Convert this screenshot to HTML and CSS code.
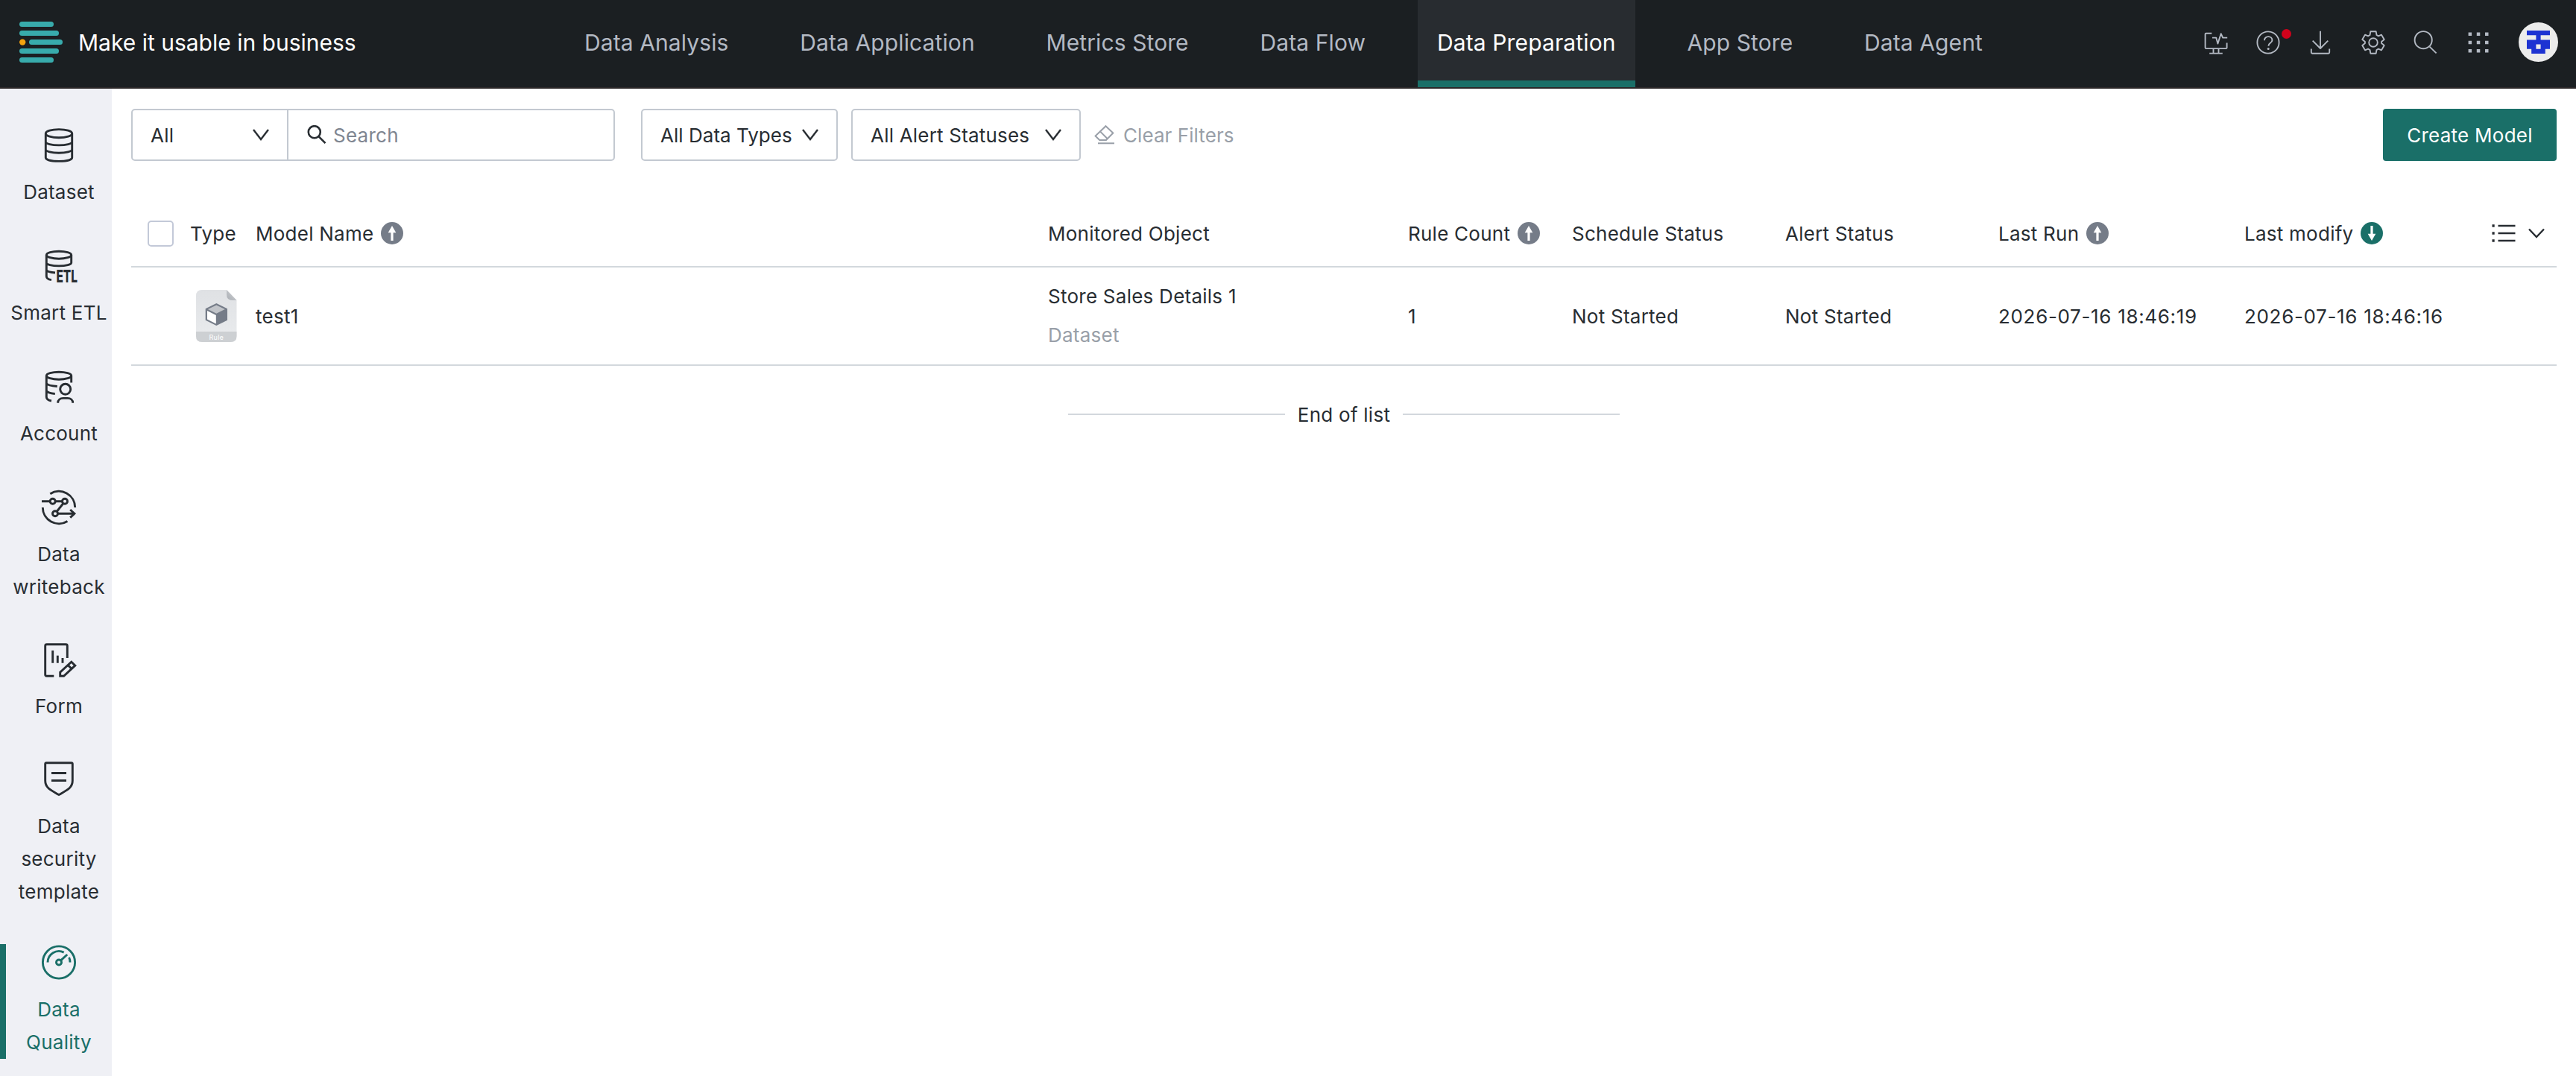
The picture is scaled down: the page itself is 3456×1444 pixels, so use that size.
FILE: index.html
```html
<!DOCTYPE html>
<html lang="en">

<head>
	<meta charset="UTF-8">
	<meta name="viewport" content="width=device-width, initial-scale=1.0">
	<title>Data Quality</title>
	<link rel="stylesheet" href="styles.css">
</head>

<body>
	<header class="topbar">
		<div class="brand">
			<svg class="logo" viewBox="0 0 60 56">
				<g fill="#38abac">
					<rect x="1" y="0" width="46" height="7" rx="3.5" />
					<rect x="1" y="12" width="53" height="7" rx="3.5" />
					<rect x="14" y="24" width="45" height="7" rx="3.5" />
					<rect x="1" y="36" width="53" height="7" rx="3.5" />
					<rect x="1" y="48" width="46" height="7" rx="3.5" />
				</g>
				<circle cx="5.2" cy="27.6" r="4.2" fill="#f5a30f" />
			</svg>
			<span>Make it usable in business</span>
		</div>

		<nav class="topnav">
			<a href="#">Data Analysis</a>
			<a href="#">Data Application</a>
			<a href="#">Metrics Store</a>
			<a href="#">Data Flow</a>
			<a href="#" class="active">Data Preparation</a>
			<a href="#">App Store</a>
			<a href="#">Data Agent</a>
		</nav>

		<div class="tools">
			<svg class="tool" viewBox="0 0 32 32">
				<path d="M10.3 3.7H2.8q-1.2 0-1.2 1.2v18q0 1.2 1.2 1.2h26.6q1.2 0 1.2-1.2V16.5M11 9.6h5.2l2.2 8 4.3-13.4 2.5 5.4h6M12.5 24v6.4M19.5 24v6.4M7.2 30.6h17.6" />
			</svg>
			<span class="help">
				<svg class="tool" viewBox="0 0 32 32">
					<circle cx="16" cy="16" r="14.6" />
					<path d="M11 13.2v-.3a5 4.6 0 0 1 10.4 0c0 3.8-5 3.4-5 7.8" />
					<circle cx="16.2" cy="24.6" r="1.5" class="solid" />
				</svg>
				<i class="dot"></i>
			</span>
			<svg class="tool" viewBox="0 0 32 32">
				<path d="M16 .7v23M5.7 13.6L16 24l10.3-10.4M3.8 24.5v4.8q0 1.4 1.4 1.4h21.6q1.4 0 1.4-1.4v-4.8" />
			</svg>
			<svg class="tool" viewBox="0 0 32 32">
				<path d="M11.5 6L12.3 1.3h7.4L20.5 6l2.4 1.4 4.1-1.7 3.7 6.2-3.6 3v2.2l3.6 3-3.7 6.2-4.1-1.7-2.4 1.4-.8 4.7h-7.4L11.5 26l-2.4-1.4L5 26.3l-3.7-6.2 3.6-3v-2.2l-3.6-3L5 5.7l4.1 1.7z" />
				<circle cx="16" cy="16" r="5.8" />
			</svg>
			<svg class="tool" viewBox="0 0 32 32">
				<circle cx="13.2" cy="12.7" r="11.6" />
				<path d="M21.6 21.6l9 8.8" />
			</svg>
			<svg class="tool" viewBox="0 0 32 32">
				<path class="solid" d="M2.6 2.6h4.5v4.5H2.6zM13.8 2.6h4.5v4.5h-4.5zM25 2.6h4.5v4.5H25zM2.6 13.8h4.5v4.5H2.6zM13.8 13.8h4.5v4.5h-4.5zM25 13.8h4.5v4.5H25zM2.6 25h4.5v4.5H2.6zM13.8 25h4.5v4.5h-4.5zM25 25h4.5v4.5H25z" />
			</svg>
			<svg class="avatar" viewBox="0 0 53 53">
				<circle cx="26.5" cy="26.5" r="26.5" fill="#ececec" />
				<path fill="#1d33d2" fill-rule="evenodd" d="M11 11h31v6.2H29.6v6.2H42v12.4h-6.2V42H17.2v-6.2H11V23.4h12.4v-6.2H11zM23.4 29.6v6.2h6.2v-6.2z" />
			</svg>
		</div>
	</header>

	<div class="layout">
		<aside class="sidebar">
			<a href="#" class="side-item">
				<svg viewBox="0 0 50 50">
					<ellipse cx="25" cy="9.2" rx="17.7" ry="5.6" />
					<path d="M7.3 9.2v32.3c0 3 8 4.9 17.7 4.9s17.7-1.9 17.7-4.9V9.2M7.3 20.2c0 2.7 8 4.7 17.7 4.7s17.7-2 17.7-4.7M7.3 30.6c0 2.7 8 4.7 17.7 4.7s17.7-2 17.7-4.7" />
				</svg>
				<span>Dataset</span>
			</a>
			<a href="#" class="side-item">
				<svg viewBox="0 0 50 50">
					<ellipse cx="25" cy="10.2" rx="16.7" ry="5" />
					<path d="M41.7 10.2v10.2c0 2.5-7 4.5-16.7 4.5S8.3 22.9 8.3 20.4M8.3 10.2v28.5c0 2.4 2.6 4.2 6.7 4.9M8.3 30.5c1.2 2 5 3 11.7 3.5" />
					<text x="21.4" y="46.8" textLength="28.6" lengthAdjust="spacingAndGlyphs">ETL</text>
				</svg>
				<span>Smart ETL</span>
			</a>
			<a href="#" class="side-item">
				<svg viewBox="0 0 50 50">
					<ellipse cx="25" cy="10.2" rx="16.7" ry="5" />
					<path d="M41.7 10.2v9.3M8.3 10.2v28.5c0 2.6 2.6 4.5 6.7 5.3M8.3 20.5c1.6 2.5 6 3.5 14.5 4M8.3 30.5c1.2 2.2 5 3.4 11.5 4" />
					<circle cx="33.7" cy="28.3" r="7" />
					<path d="M23.7 46.7c0-4 3-6.3 7-6.3h6c4 0 7 2.3 7 6.3" />
				</svg>
				<span>Account</span>
			</a>
			<a href="#" class="side-item">
				<svg viewBox="0 0 50 50">
					<path d="M13.3 6.7A21.7 21.7 0 0 1 46.7 25M3.3 25A21.7 21.7 0 0 0 36.5 43.4" />
					<circle cx="16.7" cy="16.7" r="3.5" />
					<circle cx="33" cy="16.7" r="3.5" />
					<circle cx="20" cy="33.3" r="3.5" />
					<path d="M2 16.7h11.2M20.2 16.7h9.3M30.9 19.5l-8.7 11M23.5 33.3h22M40.2 28l5.7 5.3-5.7 5.3" />
				</svg>
				<span>Data<br>writeback</span>
			</a>
			<a href="#" class="side-item">
				<svg viewBox="0 0 50 50">
					<path d="M36.3 23V6.7q0-2-2-2H8.7q-2 0-2 2v38.6q0 2 2 2h9.6M16.7 13v16.7M23.3 19.7v10M30 23v6.7" />
					<path d="M26.7 47.3v-5.2L41.8 28.2l5 4.9-15.2 14.2zM37 32.5l5 4.9" />
				</svg>
				<span>Form</span>
			</a>
			<a href="#" class="side-item">
				<svg viewBox="0 0 50 50">
					<path d="M6.7 4.3q0-1.5 1.5-1.5h33.6q1.5 0 1.5 1.5v22.5c0 10-8.5 13-18.3 18.8C15.2 39.8 6.7 36.8 6.7 26.8zM15 16.5h20M15 26.5h20" />
				</svg>
				<span>Data<br>security<br>template</span>
			</a>
			<a href="#" class="side-item active">
				<svg viewBox="0 0 50 50">
					<circle cx="25" cy="24.5" r="21.6" />
					<circle cx="25" cy="24.5" r="3.5" />
					<path d="M10 24.5A15 15 0 0 1 31.7 11.1M38.6 17.8Q40.1 21 40 24.5M27.6 21.9l8.6-7.9" />
				</svg>
				<span>Data<br>Quality</span>
			</a>
		</aside>

		<main class="content">
			<div class="toolbar">
				<div class="search-group">
					<button class="select scope">
						<span>All</span>
						<svg class="chevron" viewBox="0 0 22 16"><path d="M1 1l10 13L21 1" /></svg>
					</button>
					<div class="search-box">
						<svg class="search-icon" viewBox="0 0 26 26">
							<circle cx="9.8" cy="9.2" r="8" />
							<path d="M15.5 15.2l9 9" />
						</svg>
						<input type="text" placeholder="Search">
					</div>
				</div>
				<button class="select types">
					<span>All Data Types</span>
					<svg class="chevron" viewBox="0 0 22 16"><path d="M1 1l10 13L21 1" /></svg>
				</button>
				<button class="select statuses">
					<span>All Alert Statuses</span>
					<svg class="chevron" viewBox="0 0 22 16"><path d="M1 1l10 13L21 1" /></svg>
				</button>
				<button class="clear">
					<svg viewBox="0 0 28 28">
						<path d="M15.5 2.2l9.8 9.3-9.3 9.5H7.2L1.6 15.5zM8.2 9.6l9.6 9.6" />
						<path d="M5 25.3h22" />
					</svg>
					<span>Clear Filters</span>
				</button>
				<button class="create">Create Model</button>
			</div>

			<div class="table">
				<div class="row head">
					<div><span class="checkbox"></span></div>
					<div>Type</div>
					<div>Model Name
						<svg class="sort" viewBox="0 0 30 30"><circle cx="15" cy="15" r="15" /><path d="M15 5l5.3 9.3h-3.7V25h-3.2V14.3H9.7z" /></svg>
					</div>
					<div>Monitored Object</div>
					<div>Rule Count
						<svg class="sort" viewBox="0 0 30 30"><circle cx="15" cy="15" r="15" /><path d="M15 5l5.3 9.3h-3.7V25h-3.2V14.3H9.7z" /></svg>
					</div>
					<div>Schedule Status</div>
					<div>Alert Status</div>
					<div>Last Run
						<svg class="sort" viewBox="0 0 30 30"><circle cx="15" cy="15" r="15" /><path d="M15 5l5.3 9.3h-3.7V25h-3.2V14.3H9.7z" /></svg>
					</div>
					<div>Last modify
						<svg class="sort desc" viewBox="0 0 30 30"><circle cx="15" cy="15" r="15" /><path d="M15 25l5.3-9.3h-3.7V5h-3.2v10.7H9.7z" /></svg>
					</div>
					<div class="view">
						<svg class="list" viewBox="0 0 32 24">
							<path d="M8.5 2h23M8.5 12h23M8.5 22h23" />
							<path d="M.5 2h3.2M.5 12h3.2M.5 22h3.2" class="bullets" />
						</svg>
						<svg class="caret" viewBox="0 0 22 14"><path d="M1 1.5l10 10.5L21 1.5" /></svg>
					</div>
				</div>

				<div class="row">
					<div></div>
					<div>
						<svg class="file" viewBox="0 0 56 72">
							<defs>
								<linearGradient id="sheet" x1="0" y1="0" x2="0" y2="1">
									<stop offset="0" stop-color="#dfe1e4" />
									<stop offset="1" stop-color="#eaecee" />
								</linearGradient>
								<linearGradient id="fold" x1="0" y1="1" x2="1" y2="0">
									<stop offset="0" stop-color="#a9adb3" />
									<stop offset="1" stop-color="#d3d5d8" />
								</linearGradient>
							</defs>
							<path d="M8 1h33l13.5 14v48q0 8-8 8H8q-8 0-8-8V9q0-8 8-8z" fill="url(#sheet)" />
							<path d="M0 57h54.5v6q0 8-8 8H8q-8 0-8-8z" fill="#cdd0d3" />
							<path d="M41 1l13.5 14H49q-8 0-8-8z" fill="url(#fold)" />
							<path d="M27.3 19L42 26.2v15.6L27.3 49 12.7 41.8V26.2z" fill="#757c88" />
							<path d="M27.3 21.4L38.8 27l-11.5 5.8L15.8 27z" fill="#c1c4c9" />
							<path d="M15 29l11.8 6v11.5L15 40.5z" fill="#fff" />
							<text x="27.3" y="67.6">Rule</text>
						</svg>
					</div>
					<div>test1</div>
					<div class="object">
						<span>Store Sales Details 1</span>
						<span class="kind">Dataset</span>
					</div>
					<div>1</div>
					<div>Not Started</div>
					<div>Not Started</div>
					<div class="date">2026-07-16 18:46:19</div>
					<div class="date">2026-07-16 18:46:16</div>
					<div></div>
				</div>
			</div>

			<div class="list-end"><span>End of list</span></div>
		</main>
	</div>
</body>

</html>
```

FILE: styles.css
```css
* {
	margin: 0;
	padding: 0;
	box-sizing: border-box;
}

body {
	display: flex;
	flex-direction: column;
	height: 100vh;
	overflow: hidden;
	background: #fff;
	color: #282d32;
	font-family: Inter, sans-serif;
	font-size: 26px;
	letter-spacing: 0.25px;
}

a {
	color: inherit;
	text-decoration: none;
}

button,
input {
	font: inherit;
	letter-spacing: inherit;
	color: inherit;
	border: none;
	background: none;
	outline: none;
}

svg {
	display: block;
	flex: none;
}

/* top bar */
.topbar {
	display: flex;
	flex: none;
	height: 119px;
	padding-right: 24px;
	background: #1b1f22;
	border-bottom: 2px solid #2c2829;
	font-size: 30px;
	letter-spacing: 0.1px;
}

.brand {
	display: flex;
	align-items: center;
	flex: 0 0 758px;
	gap: 20px;
	padding-left: 25px;
	padding-bottom: 3px;
	color: #fff;
	letter-spacing: 0;
}

.brand span,
.topnav a {
	line-height: 36px;
}

.logo {
	width: 60px;
	height: 56px;
}

.topnav {
	display: flex;
	gap: 43.8px;
}

.topnav a {
	padding: 39px 26px 0;
	border-bottom: 9px solid transparent;
	color: #b3b9c3;
	white-space: nowrap;
}

.topnav a.active {
	background: #282c30;
	border-color: #1a6f68;
	color: #fff;
	letter-spacing: 0.13px;
}

.tools {
	display: flex;
	align-items: center;
	gap: 38.4px;
	margin-left: auto;
	padding-bottom: 4px;
}

.tool {
	width: 32px;
	height: 32px;
	fill: none;
	stroke: #b3b9c3;
	stroke-width: 1.9;
	stroke-linejoin: round;
}

.tool .solid {
	fill: #b3b9c3;
	stroke: none;
}

.help {
	position: relative;
}

.dot {
	position: absolute;
	top: -2px;
	right: -15px;
	width: 13px;
	height: 13px;
	border-radius: 50%;
	background: #d0021b;
}

.avatar {
	width: 53px;
	height: 53px;
}

/* sidebar */
.layout {
	display: flex;
	flex: 1;
	min-height: 0;
}

.sidebar {
	flex: 0 0 150px;
	padding-top: 51px;
	background: #eff0f5;
}

.side-item {
	display: flex;
	flex-direction: column;
	align-items: center;
	gap: 16px;
	margin-bottom: 52px;
	padding-left: 8px;
	line-height: 44px;
	text-align: center;
	white-space: nowrap;
}

.side-item:nth-child(4) {
	margin-bottom: 50px;
}

.side-item:nth-child(5) {
	margin-bottom: 51px;
}

.side-item:nth-child(6) {
	margin-bottom: 48px;
}

.side-item.active {
	padding-left: 0;
	border-left: 8px solid #1a6f68;
	color: #1a6f68;
}

.side-item svg {
	width: 50px;
	height: 50px;
	overflow: visible;
	fill: none;
	stroke: currentColor;
	stroke-width: 2.9;
}

.side-item text {
	fill: currentColor;
	stroke: none;
	font-size: 23px;
	font-weight: 800;
	letter-spacing: 0;
}

/* filters */
.content {
	flex: 1;
	padding: 27px 26px;
}

.toolbar {
	display: flex;
	height: 70px;
}

.search-group {
	display: flex;
	flex: none;
	width: 649px;
	margin-right: 35px;
}

.select {
	display: flex;
	align-items: center;
	justify-content: space-between;
	flex: none;
	padding: 0 24px;
	border: 2px solid #c3c9d1;
	border-radius: 5px;
	white-space: nowrap;
}

.select span {
	padding-top: 1px;
}

.scope {
	width: 211px;
	border-radius: 5px 0 0 5px;
}

.types {
	width: 264px;
	margin-right: 18px;
	letter-spacing: 0.03px;
}

.statuses {
	width: 308px;
	letter-spacing: 0.2px;
}

.chevron {
	width: 22px;
	height: 16px;
	fill: none;
	stroke: #282d32;
	stroke-width: 2.4;
}

.search-box {
	display: flex;
	align-items: center;
	flex: 1;
	gap: 9px;
	min-width: 0;
	margin-left: -2px;
	padding-left: 25px;
	border: 2px solid #c3c9d1;
	border-radius: 0 5px 5px 0;
}

.search-box input {
	flex: 1;
	min-width: 0;
	padding-top: 1px;
}

.search-box input::placeholder {
	color: #7f8691;
}

.search-icon {
	width: 26px;
	height: 26px;
	fill: none;
	stroke: #282d32;
	stroke-width: 2.6;
}

.clear {
	display: flex;
	align-items: center;
	gap: 11px;
	margin-left: 18px;
	color: #999fa8;
	letter-spacing: 0.07px;
}

.clear svg {
	width: 28px;
	height: 28px;
	fill: none;
	stroke: currentColor;
	stroke-width: 2;
}

.create {
	width: 233px;
	margin-left: auto;
	border-radius: 4px;
	background: #1a6f68;
	color: #fff;
}

/* table */
.table {
	margin-top: 54px;
}

.row {
	display: grid;
	grid-template-columns: 79px 88px 1063px 483px 220px 286px 286px 330px 332px 1fr;
	height: 132px;
	border-bottom: 2px solid #d3d8dd;
}

.row.head {
	height: 89px;
}

.row > div {
	display: flex;
	align-items: center;
	white-space: nowrap;
}

.row > .date {
	letter-spacing: 0.67px;
}

.checkbox {
	width: 35px;
	height: 35px;
	margin-left: 22px;
	border: 2px solid #c3c9d8;
	border-radius: 5px;
}

.sort {
	width: 30px;
	height: 30px;
	margin: 0 0 2px 10px;
	fill: #757c88;
}

.sort path {
	fill: #fff;
}

.sort.desc {
	fill: #1a6f68;
}

.view {
	gap: 17px;
}

.view svg {
	margin-bottom: 1px;
	fill: none;
	stroke: #282d32;
	stroke-width: 2.4;
}

.list {
	width: 32px;
	height: 24px;
}

.list .bullets {
	stroke-width: 3.4;
}

.caret {
	width: 22px;
	height: 14px;
}

.file {
	width: 56px;
	height: 72px;
	margin-left: 8px;
}

.file text {
	fill: #fff;
	font-size: 9px;
	text-anchor: middle;
}

.row > .object {
	flex-direction: column;
	align-items: flex-start;
	justify-content: center;
	line-height: 52px;
}

.kind {
	color: #999fa8;
}

/* footer of the list */
.list-end {
	display: flex;
	align-items: center;
	justify-content: center;
	gap: 17px;
	height: 130px;
}

.list-end::before,
.list-end::after {
	content: "";
	width: 290.5px;
	height: 2px;
	background: #d3d8dd;
}
```
